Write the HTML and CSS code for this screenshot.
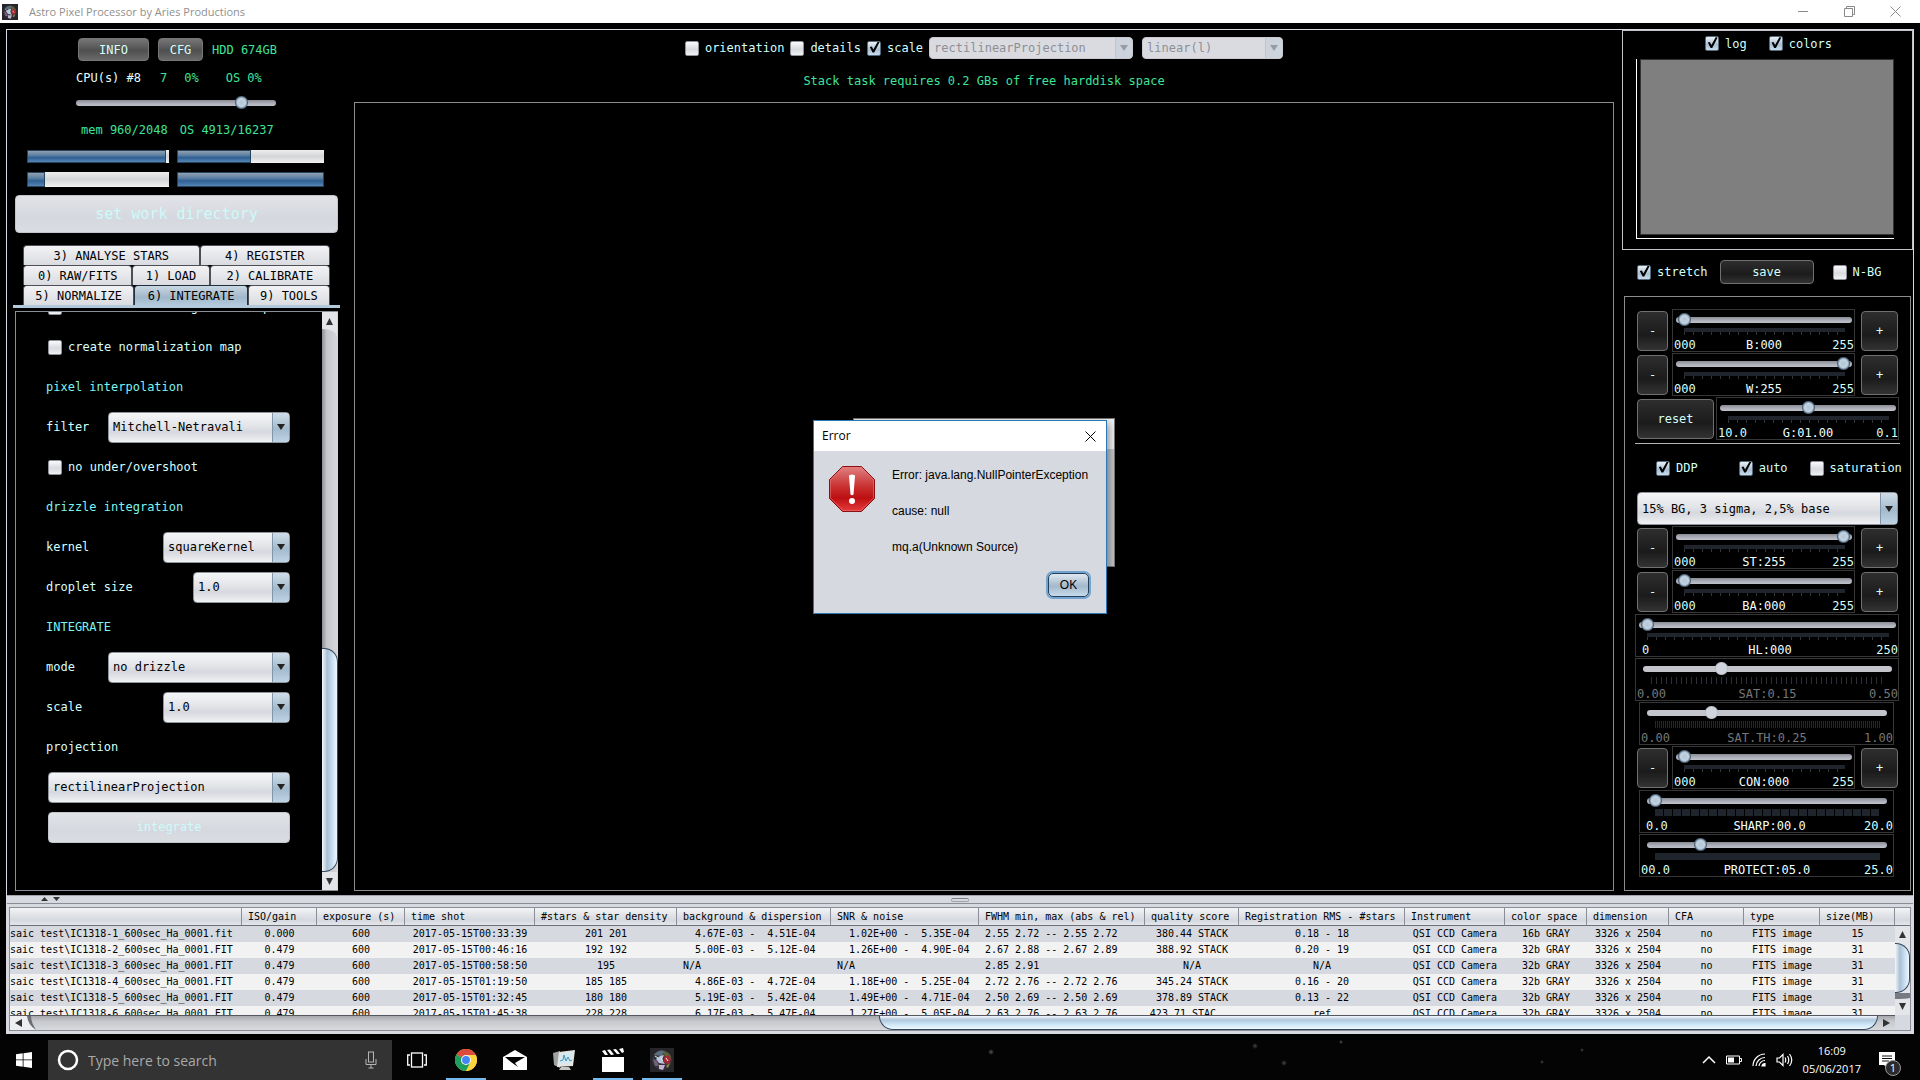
FILE: index.html
```html
<!DOCTYPE html>
<html lang="en">
<head>
    <meta charset="UTF-8">
    <meta name="viewport" content="width=device-width, initial-scale=1.0">
    <title>Astro Pixel Processor by Aries Productions</title>
    <link rel="stylesheet" href="styles.css">
</head>
<body>
    <svg class="defs" width="0" height="0" aria-hidden="true">
        <symbol id="logo" viewBox="0 0 24 24">
            <rect width="24" height="24" fill="#26262a"/>
            <circle cx="12" cy="12" r="10" fill="#34343c"/>
            <path d="M4 7 Q8 1 15 3 L12 8 Z" fill="#5d6c7e"/>
            <path d="M13 3 Q21 4 21 11 L15 9 Z" fill="#596334"/>
            <path d="M10 8 L14 7 L12 12 L15 16 L9 15 L6 11 Z" fill="#b9c8df"/>
            <path d="M14 9 L19 7 L21 12 L18 17 L14 14 Z" fill="#a52933"/>
            <path d="M3 11 L7 13 L9 18 L5 18 Z" fill="#756077"/>
            <path d="M9 17 L15 17 L13 22 L9 21 Z" fill="#c7b1d5"/>
            <path d="M16 18 L20 15 L18 20 Z" fill="#8b8a39"/>
            <path d="M5 8 L8 10 M11 10 L13 13 M16 10 L18 13" stroke="#eee" stroke-width="1"/>
        </symbol>
    </svg>

    <header class="titlebar">
        <svg class="logo" width="16" height="16"><use href="#logo"/></svg>
        <span class="title">Astro Pixel Processor by Aries Productions</span>
        <button class="win" aria-label="Minimize"><svg width="11" height="11"><path d="M0 5.500H10"/></svg></button>
        <button class="win" aria-label="Restore"><svg width="11" height="11"><path d="M.5 2.500H8.500V10.500H.5ZM2.500 2.500V.5H10.500V8.500H8.500"/></svg></button>
        <button class="win" aria-label="Close"><svg width="11" height="11"><path d="M.5 .5L10.500 10.500M10.500 .5L.5 10.500"/></svg></button>
    </header>

    <main class="app">
        <div class="workspace">
            <!-- left column -->
            <section class="left">
                <div class="sysrow">
                    <button class="btn-gray info">INFO</button>
                    <button class="btn-gray cfg">CFG</button>
                    <span class="green">HDD 674GB</span>
                </div>
                <div class="cpurow">
                    <label for="cpus">CPU(s) #8</label>
                    <span class="green">7</span>
                    <span class="green">0%</span>
                    <span class="green">OS 0%</span>
                </div>
                <input class="cpuslider" type="range" id="cpus" min="0" max="100" value="86">
                <div class="memrow green"><span>mem 960/2048</span><span>OS 4913/16237</span></div>
                <div class="bars">
                    <div class="bar"><i style="width:98%"></i></div>
                    <div class="bar"><i style="width:50%"></i></div>
                    <div class="bar tall"><i style="width:13%"></i></div>
                    <div class="bar tall"><i style="width:100%"></i></div>
                </div>
                <button class="btn-light workdir">set work directory</button>

                <nav class="tabs">
                    <div class="tabrow row-a"><button>3) ANALYSE STARS</button><button>4) REGISTER</button></div>
                    <div class="tabrow row-b"><button>0) RAW/FITS</button><button>1) LOAD</button><button>2) CALIBRATE</button></div>
                    <div class="tabrow row-c"><button>5) NORMALIZE</button><button class="active">6) INTEGRATE</button><button>9) TOOLS</button></div>
                </nav>

                <div class="pane">
                    <form class="options">
                        <div class="opt check"><input type="checkbox" id="clip"><label for="clip">normalize to background clip</label></div>
                        <div class="opt check"><input type="checkbox" id="normmap"><label for="normmap">create normalization map</label></div>
                        <div class="opt head">pixel interpolation</div>
                        <div class="opt"><label for="filter">filter</label><span class="combo wide"><select id="filter"><option>Mitchell-Netravali</option></select></span></div>
                        <div class="opt check"><input type="checkbox" id="under"><label for="under">no under/overshoot</label></div>
                        <div class="opt head">drizzle integration</div>
                        <div class="opt"><label for="kernel">kernel</label><span class="combo mid"><select id="kernel"><option>squareKernel</option></select></span></div>
                        <div class="opt"><label for="droplet">droplet size</label><span class="combo small"><select id="droplet"><option>1.0</option></select></span></div>
                        <div class="opt head">INTEGRATE</div>
                        <div class="opt"><label for="mode">mode</label><span class="combo wide"><select id="mode"><option>no drizzle</option></select></span></div>
                        <div class="opt"><label for="oscale">scale</label><span class="combo mid"><select id="oscale"><option>1.0</option></select></span></div>
                        <div class="opt"><label for="proj">projection</label></div>
                        <div class="opt"><span class="combo full"><select id="proj"><option>rectilinearProjection</option></select></span></div>
                        <div class="opt"><button type="button" class="btn-light integrate">integrate</button></div>
                    </form>
                    <div class="vscroll">
                        <svg width="15" height="24"><path d="M0 0H15V24Q12 17 0 17Z" fill="#e4e5e9"/><path d="M7.500 6L11 13H4Z" fill="#333"/></svg>
                        <span class="vspace"></span>
                        <span class="vthumb"></span>
                        <svg width="15" height="18"><path d="M7.500 13L11 6H4Z" fill="#333"/></svg>
                    </div>
                </div>
            </section>

            <!-- image viewer -->
            <section class="center">
                <div class="toolbar">
                    <input type="checkbox" id="orient"><label for="orient">orientation</label>
                    <input type="checkbox" id="details"><label for="details">details</label>
                    <input type="checkbox" id="vscale" checked><label for="vscale">scale</label>
                    <span class="combo off view-proj"><select aria-label="projection view" disabled><option>rectilinearProjection</option></select></span>
                    <span class="combo off view-lin"><select aria-label="layer" disabled><option>linear(l)</option></select></span>
                </div>
                <p class="status green">Stack task requires 0.2 GBs of free harddisk space</p>
                <div class="viewer"></div>
            </section>

            <!-- histogram and stretch -->
            <section class="right">
                <div class="histogram">
                    <div class="checks">
                        <input type="checkbox" id="log" checked><label for="log">log</label>
                        <input type="checkbox" id="colors" checked><label for="colors">colors</label>
                    </div>
                    <div class="plot"><div class="graph"></div></div>
                </div>
                <div class="saverow">
                    <input type="checkbox" id="stretch" checked><label for="stretch">stretch</label>
                    <button class="btn-dark save">save</button>
                    <input type="checkbox" id="nbg"><label for="nbg">N-BG</label>
                </div>
                <div class="dials">
                    <div class="dialrow">
                        <button class="btn-dark minus">-</button>
                        <div class="dial"><input type="range" id="b" value="0"><div class="ticks"></div><div class="nums"><span>000</span><label for="b">B:000</label><span>255</span></div></div>
                        <button class="btn-dark plus">+</button>
                    </div>
                    <div class="dialrow">
                        <button class="btn-dark minus">-</button>
                        <div class="dial"><input type="range" id="w" value="100"><div class="ticks"></div><div class="nums"><span>000</span><label for="w">W:255</label><span>255</span></div></div>
                        <button class="btn-dark plus">+</button>
                    </div>
                    <div class="dialrow gamma">
                        <button class="btn-dark reset">reset</button>
                        <div class="dial"><input type="range" id="g" value="50"><div class="ticks"></div><div class="nums"><span>10.0</span><label for="g">G:01.00</label><span>0.1</span></div></div>
                    </div>
                    <div class="ddp">
                        <input type="checkbox" id="ddp" checked><label for="ddp">DDP</label>
                        <input type="checkbox" id="auto" checked><label for="auto">auto</label>
                        <input type="checkbox" id="sat"><label for="sat">saturation</label>
                    </div>
                    <span class="combo preset"><select aria-label="stretch preset"><option>15% BG, 3 sigma, 2,5% base</option></select></span>
                    <div class="dialrow">
                        <button class="btn-dark minus">-</button>
                        <div class="dial"><input type="range" id="st" value="100"><div class="ticks"></div><div class="nums"><span>000</span><label for="st">ST:255</label><span>255</span></div></div>
                        <button class="btn-dark plus">+</button>
                    </div>
                    <div class="dialrow">
                        <button class="btn-dark minus">-</button>
                        <div class="dial"><input type="range" id="ba" value="0"><div class="ticks"></div><div class="nums"><span>000</span><label for="ba">BA:000</label><span>255</span></div></div>
                        <button class="btn-dark plus">+</button>
                    </div>
                    <div class="dialrow full">
                        <div class="dial"><input type="range" id="hl" value="0"><div class="ticks"></div><div class="nums indent"><span>0</span><label for="hl">HL:000</label><span>250</span></div></div>
                    </div>
                    <div class="dialrow full">
                        <div class="dial off inset"><input type="range" id="satv" value="30" disabled><div class="ticks sparse"></div><div class="nums"><span>0.00</span><label for="satv">SAT:0.15</label><span>0.50</span></div></div>
                    </div>
                    <div class="dialrow narrow">
                        <div class="dial off inset"><input type="range" id="satth" value="25" disabled><div class="ticks dense"></div><div class="nums"><span>0.00</span><label for="satth">SAT.TH:0.25</label><span>1.00</span></div></div>
                    </div>
                    <div class="dialrow">
                        <button class="btn-dark minus">-</button>
                        <div class="dial"><input type="range" id="con" value="0"><div class="ticks"></div><div class="nums"><span>000</span><label for="con">CON:000</label><span>255</span></div></div>
                        <button class="btn-dark plus">+</button>
                    </div>
                    <div class="dialrow narrow">
                        <div class="dial inset"><input type="range" id="sharp" value="0"><div class="ticks blocks"></div><div class="nums indent"><span>0.0</span><label for="sharp">SHARP:00.0</label><span>20.0</span></div></div>
                    </div>
                    <div class="dialrow narrow">
                        <div class="dial inset"><input type="range" id="protect" value="20"><div class="ticks solid"></div><div class="nums"><span>00.0</span><label for="protect">PROTECT:05.0</label><span>25.0</span></div></div>
                    </div>
                </div>
            </section>
        </div>

        <!-- file list -->
        <div class="splitter">
            <svg width="28" height="5"><path d="M0 4H7L3.500 0ZM12 0H19L15.500 4Z" fill="#333"/></svg>
            <span class="grip"></span>
        </div>
        <section class="files">
            <div class="filebox">
                <div class="tableview">
                    <table>
                        <colgroup>
                            <col><col class="c75"><col class="c88"><col class="c130"><col class="c142"><col class="c154"><col class="c148"><col class="c166"><col class="c94"><col class="c166"><col class="c100"><col class="c82"><col class="c82"><col class="c75"><col class="c76"><col class="c75">
                        </colgroup>
                        <thead>
                            <tr><th></th><th>ISO/gain</th><th>exposure (s)</th><th>time shot</th><th>#stars &amp; star density</th><th>background &amp; dispersion</th><th>SNR &amp; noise</th><th>FWHM min, max (abs &amp; rel)</th><th>quality score</th><th>Registration RMS - #stars</th><th>Instrument</th><th>color space</th><th>dimension</th><th>CFA</th><th>type</th><th>size(MB)</th></tr>
                        </thead>
                        <tbody>
                            <tr><td class="name">saic test\IC1318-1_600sec_Ha_0001.fit</td><td>0.000</td><td>600</td><td>2017-05-15T00:33:39</td><td>201 201</td><td class="l">  4.67E-03 -  4.51E-04</td><td class="l">  1.02E+00 -  5.35E-04</td><td class="l">2.55 2.72 -- 2.55 2.72</td><td>380.44 STACK</td><td>0.18 - 18</td><td>QSI CCD Camera</td><td>16b GRAY</td><td>3326 x 2504</td><td>no</td><td>FITS image</td><td>15</td></tr>
                            <tr><td class="name">saic test\IC1318-2_600sec_Ha_0001.FIT</td><td>0.479</td><td>600</td><td>2017-05-15T00:46:16</td><td>192 192</td><td class="l">  5.00E-03 -  5.12E-04</td><td class="l">  1.26E+00 -  4.90E-04</td><td class="l">2.67 2.88 -- 2.67 2.89</td><td>388.92 STACK</td><td>0.20 - 19</td><td>QSI CCD Camera</td><td>32b GRAY</td><td>3326 x 2504</td><td>no</td><td>FITS image</td><td>31</td></tr>
                            <tr><td class="name">saic test\IC1318-3_600sec_Ha_0001.FIT</td><td>0.479</td><td>600</td><td>2017-05-15T00:58:50</td><td>195</td><td class="l">N/A</td><td class="l">N/A</td><td class="l">2.85 2.91</td><td>N/A</td><td>N/A</td><td>QSI CCD Camera</td><td>32b GRAY</td><td>3326 x 2504</td><td>no</td><td>FITS image</td><td>31</td></tr>
                            <tr><td class="name">saic test\IC1318-4_600sec_Ha_0001.FIT</td><td>0.479</td><td>600</td><td>2017-05-15T01:19:50</td><td>185 185</td><td class="l">  4.86E-03 -  4.72E-04</td><td class="l">  1.18E+00 -  5.25E-04</td><td class="l">2.72 2.76 -- 2.72 2.76</td><td>345.24 STACK</td><td>0.16 - 20</td><td>QSI CCD Camera</td><td>32b GRAY</td><td>3326 x 2504</td><td>no</td><td>FITS image</td><td>31</td></tr>
                            <tr><td class="name">saic test\IC1318-5_600sec_Ha_0001.FIT</td><td>0.479</td><td>600</td><td>2017-05-15T01:32:45</td><td>180 180</td><td class="l">  5.19E-03 -  5.42E-04</td><td class="l">  1.49E+00 -  4.71E-04</td><td class="l">2.50 2.69 -- 2.50 2.69</td><td>378.89 STACK</td><td>0.13 - 22</td><td>QSI CCD Camera</td><td>32b GRAY</td><td>3326 x 2504</td><td>no</td><td>FITS image</td><td>31</td></tr>
                            <tr><td class="name">saic test\IC1318-6_600sec_Ha_0001.FIT</td><td>0.479</td><td>600</td><td>2017-05-15T01:45:38</td><td>228 228</td><td class="l">  6.17E-03 -  5.47E-04</td><td class="l">  1.27E+00 -  5.05E-04</td><td class="l">2.63 2.76 -- 2.63 2.76</td><td>423.71 STAC   </td><td>ref</td><td>QSI CCD Camera</td><td>32b GRAY</td><td>3326 x 2504</td><td>no</td><td>FITS image</td><td>31</td></tr>
                        </tbody>
                    </table>
                </div>
                <div class="tablescroll">
                    <span class="corner"></span>
                    <svg width="15" height="17"><path d="M7.500 5L11 12H4Z" fill="#333"/></svg>
                    <span class="tthumb"></span>
                    <svg width="15" height="22"><path d="M0 0Q12 0 15 -4V5Q10 6 0 6Z" fill="#777a80"/><path d="M7.500 17L11 10H4Z" fill="#333"/></svg>
                </div>
                <div class="hscroll">
                    <svg width="26" height="14"><path d="M0 0H18Q18 8 26 14H0Z" fill="#eceef1"/><path d="M17 0Q18 9 26 14Q21 6 21 0Z" fill="#6b6e74"/><path d="M5 7L12 3V11Z" fill="#333"/></svg>
                    <span class="hthumb"></span>
                    <svg width="17" height="14"><path d="M12 7L5 3V11Z" fill="#333"/></svg>
                </div>
            </div>
        </section>
    </main>

    <footer class="taskbar">
        <button class="start" aria-label="Start"><svg width="16" height="16"><path d="M0 2.300L6.700 1.300V7.500H0ZM7.500 1.200L16 0V7.500H7.500ZM0 8.300H6.700V14.700L0 13.700ZM7.500 8.300H16V16L7.500 14.800Z" fill="#fff"/></svg></button>
        <div class="search">
            <svg width="22" height="22"><circle cx="11" cy="11" r="9" fill="none" stroke="#fff" stroke-width="2.500"/></svg>
            <input type="text" aria-label="Search" placeholder="Type here to search">
            <svg width="12" height="18" fill="none" stroke="#b5b5b5"><rect x="3.500" y="1" width="5" height="10"/><path d="M1 8V13.500H11V8M6 13.500V17M3.500 17H8.500"/></svg>
        </div>
        <button class="task" aria-label="Task view"><svg width="20" height="16" fill="none" stroke="#fff" stroke-width="1.300"><rect x="4.500" y="1" width="11" height="14"/><path d="M3 3H.7V13H3M17 3H19.300V13H17"/></svg></button>
        <button class="task open" aria-label="Chrome"><svg width="22" height="22" viewBox="0 0 24 24"><circle cx="12" cy="12" r="12" fill="#fcd33c"/><path d="M12 12L1.600 6A12 12 0 0 1 22.400 6Z" fill="#dd4b3e"/><path d="M12 12L1.600 6A12 12 0 0 0 12 24L17.200 15Z" fill="#1d9f5b"/><path d="M12 6.500H22.700A12 12 0 0 1 12 24L17 14Z" fill="#fcd33c"/><circle cx="12" cy="12" r="5.500" fill="#f4f4f4"/><circle cx="12" cy="12" r="4.300" fill="#4285f4"/></svg></button>
        <button class="task" aria-label="Mail"><svg width="24" height="20"><path d="M0 7L12 0L24 7V20H0Z" fill="#fff"/><path d="M2 7H22L12 13L15 17L8 12Z" fill="#000"/></svg></button>
        <button class="task" aria-label="Resource monitor"><svg width="24" height="22"><path d="M1 4L8 2V19L2 16Z" fill="#9fa2a3"/><path d="M7 3L23 1L21 17L5 18Z" fill="#e5e6e3"/><path d="M9 5L21 3L19 14L7 15Z" fill="#d3e9f2"/><path d="M8 12L11 11L12 6L14 12L16 8L18 12L20 11" fill="none" stroke="#4493bf"/><path d="M9 18H17L19 21H7Z" fill="#c4c6c4"/></svg></button>
        <button class="task open" aria-label="Movies"><svg width="24" height="24"><rect x="1" y="9" width="22" height="15" fill="#fff"/><path d="M1 3L4 2L7 7H4ZM6 2L9 1.500L13 6.500L10 7ZM12 1.500L15 1L19 6L16 6ZM18 1L22 0L23 4L21 5Z" fill="#fff"/></svg></button>
        <button class="task open current" aria-label="Astro Pixel Processor"><svg width="24" height="24"><use href="#logo"/></svg></button>
        <div class="tray">
            <svg width="14" height="10"><path d="M1 8L7 2L13 8" fill="none" stroke="#fff" stroke-width="1.500"/></svg>
            <svg width="16" height="10"><path d="M.5 1H13.500V9H.5ZM14 3.500H15.500V6.500H14" fill="none" stroke="#fff"/><rect x="2" y="2.500" width="6" height="5" fill="#fff"/></svg>
            <svg width="14" height="14" fill="none" stroke="#fff" stroke-width="1.200"><path d="M1 13A12 12 0 0 1 13 1M4 13A9 9 0 0 1 13 4.500M7 13A6 6 0 0 1 13 7.500"/><path d="M10 13A3 3 0 0 1 13 10.500V13Z" fill="#fff"/></svg>
            <svg width="17" height="14" fill="none" stroke="#fff" stroke-width="1.200"><path d="M1 5H3.500L7 1.500V12.500L3.500 9H1ZM9 4.500Q10.500 7 9 9.500M11.500 3Q14 7 11.500 11M13.500 1Q18 7 13.500 13"/></svg>
            <div class="clock"><span>16:09</span><span>05/06/2017</span></div>
            <div class="notify">
                <svg width="16" height="16"><path d="M0 0H16V13H8V16L5 13H0Z" fill="#fff"/><path d="M3 4H13M3 6.500H13M3 9H10" stroke="#111"/></svg>
                <span class="badge">1</span>
            </div>
        </div>
    </footer>

    <div class="under-window"><div class="under-title"></div></div>
    <div class="dialog" role="dialog" aria-label="Error">
        <div class="dialog-title"><span>Error</span><button aria-label="Close dialog"><svg width="11" height="11"><path d="M.5 .5L10.500 10.500M10.500 .5L.5 10.500" stroke="#000" fill="none"/></svg></button></div>
        <div class="dialog-body">
            <svg width="46" height="46" viewBox="0 0 46 46">
                <defs><linearGradient id="red" x1="0" y1="0" x2="0" y2="1"><stop offset="0" stop-color="#e08182"/><stop offset=".45" stop-color="#c9302f"/><stop offset=".7" stop-color="#bd0f12"/><stop offset="1" stop-color="#e63c3e"/></linearGradient></defs>
                <path d="M13.500 .5H32.500L45.500 13.500V32.500L32.500 45.500H13.500L.5 32.500V13.500Z" fill="url(#red)" stroke="#8e0f12"/>
                <path d="M14 1.500H32L44.500 14V32L32 44.500H14L1.500 32V14Z" fill="none" stroke="#ea7577" stroke-opacity=".6"/>
                <path d="M20 10Q20 8.500 23 8.500Q26 8.500 26 10L24.500 28.500Q23 30 21.500 28.500Z" fill="#fff"/>
                <circle cx="23" cy="35" r="3" fill="#fff"/>
            </svg>
            <div class="message">
                <p>Error: java.lang.NullPointerException</p>
                <p>cause: null</p>
                <p>mq.a(Unknown Source)</p>
            </div>
        </div>
        <div class="dialog-foot"><button class="ok">OK</button></div>
    </div>
</body>
</html>
```
FILE: styles.css
```css
*{
    box-sizing: border-box;
}
body{
    margin: 0;
    min-height: 100vh;
    display: flex;
    flex-direction: column;
    position: relative;
    background: #000;
    color: #d4fffb;
    font-family: "DejaVu Sans Mono", monospace;
    font-size: 12px;
    line-height: 14px;
}
button, select, input{
    font: inherit;
    color: inherit;
    margin: 0;
    padding: 0;
}
button{
    border: 0;
    background: none;
    white-space: nowrap;
}
svg{
    display: block;
    flex: none;
}
p{
    margin: 0;
}
.defs{
    position: absolute;
}
.green{
    color: #3fe39a;
}

/* title bar */
.titlebar{
    display: flex;
    align-items: center;
    height: 23px;
    padding: 0 2px;
    background: #fff;
    color: #8f8f8f;
    font-family: "Open Sans", sans-serif;
    font-size: 11px;
}
.title{
    flex: 1;
    padding-left: 11px;
}
.win{
    width: 46px;
    height: 23px;
    display: grid;
    place-items: center;
}
.win svg{
    fill: none;
    stroke: #8a8a8a;
}

.app{
    flex: 1;
    display: flex;
    flex-direction: column;
    margin: 6px 6px 6px 6px;
    border: 1px solid #d6d9df;
    border-bottom: 0;
}
.workspace{
    flex: 1;
    display: grid;
    grid-template-columns: 339px minmax(0, 1fr) 291px;
    column-gap: 8px;
}

/* buttons */
.btn-gray, .btn-dark, .btn-light{
    border-radius: 4px;
}
.btn-gray{
    height: 23px;
    background: linear-gradient(#767676, #505050 55%, #6a6a6a);
    border: 1px solid #777;
}
.btn-dark{
    background: linear-gradient(#2e2e2e, #1b1b1b 60%, #333);
    border: 1px solid #707070;
}
.btn-light{
    background: linear-gradient(#e1e3e7, #d5d8de 60%, #d9dce1);
    border: 1px solid #c2c5cc;
}

/* check boxes */
input[type=checkbox]{
    appearance: none;
    flex: none;
    width: 14px;
    height: 15px;
    border: 1px solid #8e9198;
    border-radius: 2px;
    background: linear-gradient(#fbfbfc, #d8dae0 55%, #f0f1f4);
}
input[type=checkbox]:checked{
    background: linear-gradient(#e9f0f6, #a9bfd2 60%, #c9dcec);
    border-color: #566a7e;
}
input[type=checkbox]:checked::before{
    content: "";
    display: block;
    width: 12px;
    height: 12px;
    background: #000;
    clip-path: polygon(15% 45%, 32% 42%, 45% 66%, 82% 0, 96% 6%, 52% 92%, 38% 92%);
}

/* sliders */
input[type=range]{
    appearance: none;
    display: block;
    height: 17px;
    background: none;
}
input[type=range]::-webkit-slider-runnable-track{
    height: 6px;
    border-radius: 3px;
    background: linear-gradient(#8a8c94, #aaadb6 50%, #bfc2ca);
}
input[type=range]::-webkit-slider-thumb{
    appearance: none;
    width: 17px;
    height: 13px;
    margin-top: -4px;
    background: radial-gradient(circle at 50% 50%, #b3c5d5 0, #c3d3e0 4px, #93a9bd 5px, #4f6478 6px, transparent 7px);
}
input[type=range]:disabled::-webkit-slider-runnable-track{
    background: #c3c5cb;
}
input[type=range]:disabled::-webkit-slider-thumb{
    background: radial-gradient(circle at 50% 50%, #d0d4dc 0, #d0d4dc 5px, #b9bcc5 6px, transparent 7px);
}

/* drop-downs */
.combo{
    position: relative;
    display: block;
    height: 31px;
}
.combo select{
    appearance: none;
    width: 100%;
    height: 100%;
    padding: 0 20px 0 4px;
    border: 1px solid #8f949d;
    border-radius: 4px;
    background: linear-gradient(#f6f6f8, #e2e4e8 45%, #d5d8de 65%, #f0f1f4);
    color: #000;
}
.combo::before{
    content: "";
    position: absolute;
    top: 1px;
    right: 1px;
    bottom: 1px;
    width: 16px;
    border-left: 1px solid #8096aa;
    border-radius: 0 3px 3px 0;
    background: linear-gradient(#d0dde8, #a3bacd 55%, #bfd3e4);
    pointer-events: none;
}
.combo::after{
    content: "";
    position: absolute;
    top: calc(50% - 3px);
    right: 5px;
    border: 4px solid transparent;
    border-top: 6px solid #222;
    border-bottom: 0;
    pointer-events: none;
}
.combo.off select{
    background: #d9dbe1;
    border-color: #c8cad0;
    color: #8e8f94;
    opacity: 1;
}
.combo.off::before{
    background: #ccd3dd;
    border-color: #bcc6d2;
}
.combo.off::after{
    border-top-color: #979ca4;
}

/* left column */
.left{
    display: flex;
    flex-direction: column;
    padding: 8px 8px 4px 8px;
}
.sysrow{
    display: flex;
    align-items: center;
    gap: 9px;
    padding-left: 63px;
}
.info{
    width: 71px;
}
.cfg{
    width: 45px;
}
.cpurow{
    display: flex;
    margin-top: 10px;
    padding-left: 61px;
    color: #e6ffff;
}
.cpurow label{
    width: 84px;
}
.cpurow span{
    margin-right: 17px;
}
.cpurow span:last-child{
    margin-left: 10px;
}
.cpuslider{
    width: 200px;
    margin: 9px 0 0 61px;
}
.memrow{
    display: flex;
    gap: 12px;
    padding: 12px 0 0 66px;
}
.bars{
    display: grid;
    grid-template-columns: 142px 147px;
    gap: 9px 8px;
    margin: 13px 0 8px 12px;
}
.bar{
    height: 13px;
    background: linear-gradient(#eee, #d4d5d7 50%, #f2f2f2);
}
.bar.tall{
    height: 15px;
}
.bar i{
    display: block;
    height: 100%;
    border: 1px solid #24455f;
    background: linear-gradient(#91a0b0, #5b7fa3 40%, #2f6093 60%, #5685b3);
}
.workdir{
    height: 38px;
    font-size: 15px;
    color: #cdfafa;
}
.tabs{
    margin: 12px -2px 3px -2px;
    padding: 0 10px 0 10px;
    border-bottom: 3px solid #b3c9dc;
}
.tabrow{
    display: grid;
}
.row-a{
    grid-template-columns: 176fr 130fr;
}
.row-b{
    grid-template-columns: 109fr 77fr 120fr;
}
.row-c{
    grid-template-columns: 111fr 113fr 82fr;
}
.tabrow button{
    height: 20px;
    border: 1px solid #4c4f55;
    border-bottom: 0;
    border-radius: 4px 4px 0 0;
    background: linear-gradient(#f3f3f5, #d9dbe0);
    color: #000;
}
.tabrow .active{
    background: linear-gradient(#c9d7e3, #a1b7ca 60%, #b3c9dc);
    border-color: #203040;
}
.pane{
    flex: 1;
    display: flex;
    min-height: 0;
    border: 1px solid #8c8f96;
    border-right: 0;
    overflow: hidden;
}
.options{
    flex: 1;
    margin-top: -25px;
    padding: 0 32px 0 30px;
}
.opt{
    display: flex;
    align-items: center;
    justify-content: space-between;
    height: 40px;
}
.opt.head{
    color: #7ff3ee;
}
.opt.check{
    justify-content: flex-start;
    gap: 6px;
    padding-left: 2px;
}
.wide{
    width: 182px;
}
.mid{
    width: 127px;
}
.small{
    width: 97px;
}
.full.combo, .integrate{
    width: 242px;
    margin-left: auto;
}
.integrate{
    height: 31px;
    color: #cdfafa;
}
.vscroll{
    display: flex;
    flex-direction: column;
    width: 16px;
    background: linear-gradient(90deg, #8d8f96, #c6c7cc 30%, #d6d7dc);
}
.vspace{
    flex: 313;
}
.vthumb{
    flex: 222;
    border: 1px solid #34495c;
    border-left: 0;
    border-radius: 0 14px 14px 0;
    background: linear-gradient(90deg, #f5f8fc, #a9bfd4 35%, #cfe4f5 75%, #eef8ff);
}
.vscroll svg:last-child{
    background: #e4e5e9;
}

/* viewer */
.center{
    display: flex;
    flex-direction: column;
    padding: 7px 0 4px;
}
.toolbar{
    display: flex;
    align-items: center;
    justify-content: center;
    gap: 6px;
    height: 22px;
}
.toolbar .combo{
    height: 22px;
}
.view-proj{
    width: 204px;
    margin-right: 3px;
}
.view-lin{
    width: 141px;
}
.status{
    margin: 15px 0 14px;
    text-align: center;
}
.viewer{
    flex: 1;
    border: 1px solid #8c8c8c;
}

/* right column */
.right{
    display: flex;
    flex-direction: column;
    padding-bottom: 4px;
}
.histogram{
    height: 220px;
    border: 1px solid #c2c3c9;
    padding: 5px 18px 10px 13px;
}
.checks{
    display: flex;
    align-items: center;
    gap: 6px;
    padding-left: 69px;
}
.checks label:first-of-type{
    margin-right: 16px;
}
.plot{
    margin-top: 8px;
    padding: 0 0 3px 3px;
    border-left: 1px solid #fff;
    border-bottom: 1px solid #fff;
}
.graph{
    height: 176px;
    background: #7f7f7f;
    border: 1px solid #333;
}
.saverow{
    display: flex;
    align-items: center;
    gap: 6px;
    height: 46px;
    padding: 0 0 2px 15px;
}
.save{
    width: 94px;
    height: 24px;
    margin: 0 13px 0 6px;
}
.dials{
    flex: 1;
    margin: 0 2px;
    padding: 12px 10px 0 10px;
    border: 1px solid #8c8c8c;
}
.dialrow{
    display: flex;
    align-items: center;
    margin-bottom: 1px;
    padding: 0 2px;
}
.dialrow.full{
    padding: 0 1px 0 0;
}
.dialrow.narrow{
    padding: 0 6px 0 4px;
}
.minus{
    width: 31px;
    height: 40px;
    margin-right: 4px;
}
.plus{
    width: 37px;
    height: 40px;
    margin-left: 6px;
}
.reset{
    width: 77px;
    height: 40px;
    margin-right: 2px;
}
.dialrow.gamma{
    padding-right: 1px;
}
.dial{
    flex: 1;
    min-width: 0;
    height: 43px;
    padding-top: 1px;
    border: 1px solid #363636;
}
.dial input{
    width: calc(100% - 5px);
    margin: 0 2px 0 3px;
}
.dial.inset input{
    width: calc(100% - 13px);
    margin: 0 6px 0 7px;
}
.ticks{
    height: 7px;
    margin: 0 9px 0 11px;
    background:
        linear-gradient(#20252d, #20252d) 0 0 / 100% 4px no-repeat,
        repeating-linear-gradient(90deg, #30353c 0, #30353c 1px, transparent 1px, transparent 9px);
}
.inset .ticks{
    margin: 0 13px 0 15px;
}
.ticks.sparse{
    background: repeating-linear-gradient(90deg, #2d3036 0, #2d3036 1px, transparent 1px, transparent 5px);
}
.ticks.dense{
    background: repeating-linear-gradient(90deg, #24272d 0, #24272d 1px, transparent 1px, transparent 2px);
}
.ticks.blocks{
    background: repeating-linear-gradient(90deg, #20252d 0, #20252d 8px, #000 8px, #000 9px);
}
.ticks.solid{
    background: #20252d;
}
.nums{
    display: grid;
    grid-template-columns: 1fr auto 1fr;
    margin-top: 3px;
    padding: 0 0 0 1px;
}
.nums.indent{
    padding-left: 6px;
}
.nums label{
    color: #f2ffff;
}
.nums span:last-child{
    text-align: right;
}
.dial.off .nums, .dial.off label{
    color: #777;
}
.ddp{
    display: flex;
    align-items: center;
    gap: 6px;
    height: 49px;
    margin-top: 3px;
    padding-left: 21px;
    border-top: 1px solid #b5b5b5;
}
.ddp label:nth-of-type(1){
    margin-right: 35px;
}
.ddp label:nth-of-type(2){
    margin-right: 16px;
}
.preset{
    height: 33px;
    margin: 0 2px 1px 2px;
}

/* file list */
.splitter{
    display: grid;
    grid-template-columns: 1fr auto 1fr;
    align-items: center;
    height: 9px;
    padding-left: 34px;
    background: #d6d9df;
    border-top: 1px solid #a2a4ab;
    border-bottom: 1px solid #8a8d95;
}
.grip{
    width: 18px;
    height: 4px;
    margin-right: 34px;
    border: 1px solid #a0a3ab;
    border-top-color: #7c8088;
    border-radius: 2px;
}
.files{
    padding: 3px 2px 3px 2px;
    background: #d6d9df;
}
.filebox{
    display: grid;
    grid-template-columns: minmax(0, 1fr) 15px;
    border: 1px solid #8a8d95;
}
.tableview{
    height: 107px;
    overflow: hidden;
}
table{
    width: 100%;
    table-layout: fixed;
    border-collapse: separate;
    border-spacing: 0;
    color: #000;
    font-size: 10px;
    line-height: 12px;
}
.c75{ width: 75px; }
.c76{ width: 76px; }
.c82{ width: 82px; }
.c88{ width: 88px; }
.c94{ width: 94px; }
.c100{ width: 100px; }
.c130{ width: 130px; }
.c142{ width: 142px; }
.c148{ width: 148px; }
.c154{ width: 154px; }
.c166{ width: 166px; }
th{
    height: 18px;
    padding: 0 0 0 6px;
    text-align: left;
    font-weight: normal;
    white-space: nowrap;
    border-right: 1px solid #8a8d95;
    border-bottom: 1px solid #6d7078;
    background: linear-gradient(#f3f4f6, #d5d8de 70%, #e4e6ea);
}
td{
    height: 16px;
    padding: 0;
    text-align: center;
    white-space: pre;
    background: #d6d9df;
}
tr:nth-child(even) td{
    background: #f2f2f2;
}
td.l{
    text-align: left;
    padding-left: 6px;
}
td.name{
    text-align: left;
}
.tablescroll{
    display: flex;
    flex-direction: column;
    background: #e4e5e9;
}
.corner{
    height: 18px;
    border-bottom: 1px solid #6d7078;
    background: linear-gradient(#f3f4f6, #d5d8de 70%, #e4e6ea);
}
.tthumb{
    flex: 1;
    border: 1px solid #34495c;
    border-left: 0;
    border-radius: 0 14px 14px 0;
    background: linear-gradient(90deg, #f5f8fc, #a9bfd4 35%, #cfe4f5 75%, #eef8ff);
}
.hscroll{
    display: flex;
    height: 15px;
    background: linear-gradient(#a5a7ad, #c9cacf 40%, #d8d9dd);
    border-top: 1px solid #55585e;
}
.hthumb{
    flex: 1;
    margin-left: 44.700%;
    border: 1px solid #34495c;
    border-top: 0;
    border-radius: 0 0 14px 14px;
    background: linear-gradient(#f5f8fc, #b0c6da 30%, #cfe6f8 65%, #eef8ff);
}

/* task bar */
.taskbar{
    display: flex;
    height: 40px;
    background:
        radial-gradient(circle at 50% 50%, #444 0, transparent 2px) 1580px 8px / 4px 4px no-repeat,
        radial-gradient(circle at 50% 50%, #444 0, transparent 3px) 1252px 3px / 6px 6px no-repeat,
        radial-gradient(circle at 50% 50%, #555 0, transparent 3px) 988px 9px / 6px 6px no-repeat,
        radial-gradient(circle at 50% 50%, #444 0, transparent 3px) 1281px 20px / 6px 6px no-repeat,
        radial-gradient(circle at 50% 50%, #555 0, transparent 2px) 1339px 0 / 4px 4px no-repeat,
        radial-gradient(circle at 50% 50%, #444 0, transparent 2px) 1540px 20px / 4px 4px no-repeat,
        #050404;
    font-family: "Open Sans", sans-serif;
}
.start{
    width: 48px;
    display: grid;
    place-items: center;
}
.search{
    display: flex;
    align-items: center;
    width: 344px;
    padding: 0 15px 0 9px;
    background: #333;
}
.search input{
    flex: 1;
    min-width: 0;
    padding: 0 9px;
    border: 0;
    background: none;
    font-size: 14px;
}
.search input::placeholder{
    color: #a9a9a9;
}
.task{
    position: relative;
    width: 49px;
    display: grid;
    place-items: center;
}
.task.open::after{
    content: "";
    position: absolute;
    left: 5px;
    right: 4px;
    bottom: 0;
    height: 2px;
    background: #76b9ed;
}
.tray{
    display: flex;
    align-items: center;
    gap: 10px;
    margin-left: auto;
    padding-right: 25px;
    color: #fff;
}
.clock{
    display: grid;
    gap: 4px;
    justify-items: center;
    font-size: 11px;
}
.notify{
    position: relative;
    margin-left: 8px;
}
.badge{
    position: absolute;
    left: 6px;
    top: 8px;
    width: 16px;
    height: 16px;
    border: 1px solid #999;
    border-radius: 50%;
    background: #2b2b2b;
    text-align: center;
    font-size: 11px;
}

/* error dialog */
.under-window{
    position: absolute;
    left: calc(50% - 107px);
    top: 418px;
    width: 262px;
    height: 149px;
    background: #c2c4c9;
    border: 1px solid #777;
}
.under-title{
    height: 30px;
    background: #f0f0f0;
}
.dialog{
    position: absolute;
    left: calc(50% - 147px);
    top: 420px;
    width: 294px;
    background: #d6d9df;
    border: 1px solid #2a78b8;
    box-shadow: 2px 3px 8px rgba(0, 0, 0, 0.4);
    color: #000;
    font-family: "Liberation Sans", sans-serif;
}
.dialog-title{
    display: flex;
    align-items: center;
    justify-content: space-between;
    height: 30px;
    padding: 0 10px 0 8px;
    background: #fff;
    font-family: "Open Sans", sans-serif;
}
.dialog-body{
    display: flex;
    gap: 17px;
    padding: 15px 15px 0;
}
.message{
    display: grid;
    gap: 22px;
    padding-top: 2px;
    white-space: nowrap;
}
.dialog-foot{
    display: flex;
    justify-content: flex-end;
    padding: 19px 17px 16px;
}
.ok{
    width: 41px;
    height: 24px;
    border: 1px solid #24405a;
    border-radius: 5px;
    background: linear-gradient(#dfe8f0, #a3b8ca 55%, #c6dbeb);
    box-shadow: 0 0 0 2px #73a4d1;
}
```
